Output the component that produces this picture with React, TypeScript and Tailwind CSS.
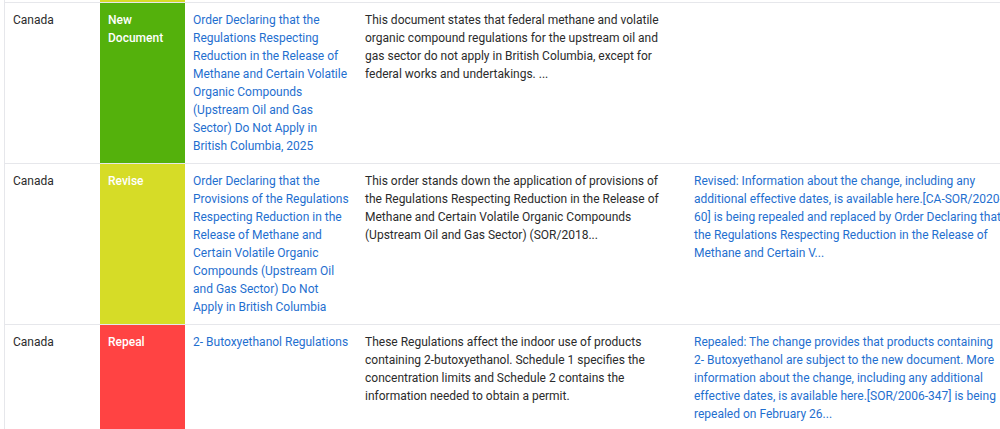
import React from "react";

type Row = {
  country: string;
  status: string;
  statusBg: string;
  title: string;
  summary: string;
  change: string;
};

const rows: Row[] = [
  {
    country: "Canada",
    status: "New Document",
    statusBg: "bg-[#54b10c]",
    title:
      "Order Declaring that the Regulations Respecting Reduction in the Release of Methane and Certain Volatile Organic Compounds (Upstream Oil and Gas Sector) Do Not Apply in British Columbia, 2025",
    summary:
      "This document states that federal methane and volatile organic compound regulations for the upstream oil and gas sector do not apply in British Columbia, except for federal works and undertakings. ...",
    change: "",
  },
  {
    country: "Canada",
    status: "Revise",
    statusBg: "bg-[#d6dc27]",
    title:
      "Order Declaring that the Provisions of the Regulations Respecting Reduction in the Release of Methane and Certain Volatile Organic Compounds (Upstream Oil and Gas Sector) Do Not Apply in British Columbia",
    summary:
      "This order stands down the application of provisions of the Regulations Respecting Reduction in the Release of Methane and Certain Volatile Organic Compounds (Upstream Oil and Gas Sector) (SOR/2018...",
    change:
      "Revised: Information about the change, including any additional effective dates, is available here.[CA-\u2060SOR/2020-\u200B60] is being repealed and replaced by Order Declaring that the Regulations Respecting Reduction in the Release of Methane and Certain V...",
  },
  {
    country: "Canada",
    status: "Repeal",
    statusBg: "bg-[#ff4343]",
    title: "2- Butoxyethanol Regulations",
    summary:
      "These Regulations affect the indoor use of products containing 2-butoxyethanol. Schedule 1 specifies the concentration limits and Schedule 2 contains the information needed to obtain a permit.",
    change:
      "Repealed: The change provides that products containing 2-\u2060\u00A0Butoxyethanol are subject to the new document. More information about the change, including any additional effective dates, is available here.[SOR/2006-347] is being repealed on February 26...",
  },
];

const cols = "grid grid-cols-[95px_85px_172px_329px_326px]";

export default function App() {
  return (
    <div
      className="w-[1000px] h-[429px] overflow-hidden bg-white"
      style={{ fontFamily: "Roboto, 'Liberation Sans', sans-serif" }}
    >
      <div className="ml-1 w-[1008px] border-l border-[#e6e7eb] text-[12px] leading-[18px]">
        {/* tail of the row above */}
        <div className={`${cols} h-[3px] border-b border-[#e6e7eb]`}>
          <div />
          <div className="bg-[#d6dc27]" />
        </div>

        {rows.map((row, i) => (
          <div key={i} className={`${cols} border-b border-[#e6e7eb]`}>
            <div className="px-2 pt-2 pb-2 text-[#2b2b2b]">{row.country}</div>
            <div className={`px-2 pt-2 pb-2 font-medium text-white ${row.statusBg}`}>
              {row.status}
            </div>
            <div className="px-2 pt-2 pb-2 text-[#1f6fcf]">{row.title}</div>
            <div className="pl-2 pr-4 pt-2 pb-2 text-[#2b2b2b]">{row.summary}</div>
            <div className="pl-2 pt-2 pb-2 text-[#1f6fcf]">{row.change}</div>
          </div>
        ))}
      </div>
    </div>
  );
}
